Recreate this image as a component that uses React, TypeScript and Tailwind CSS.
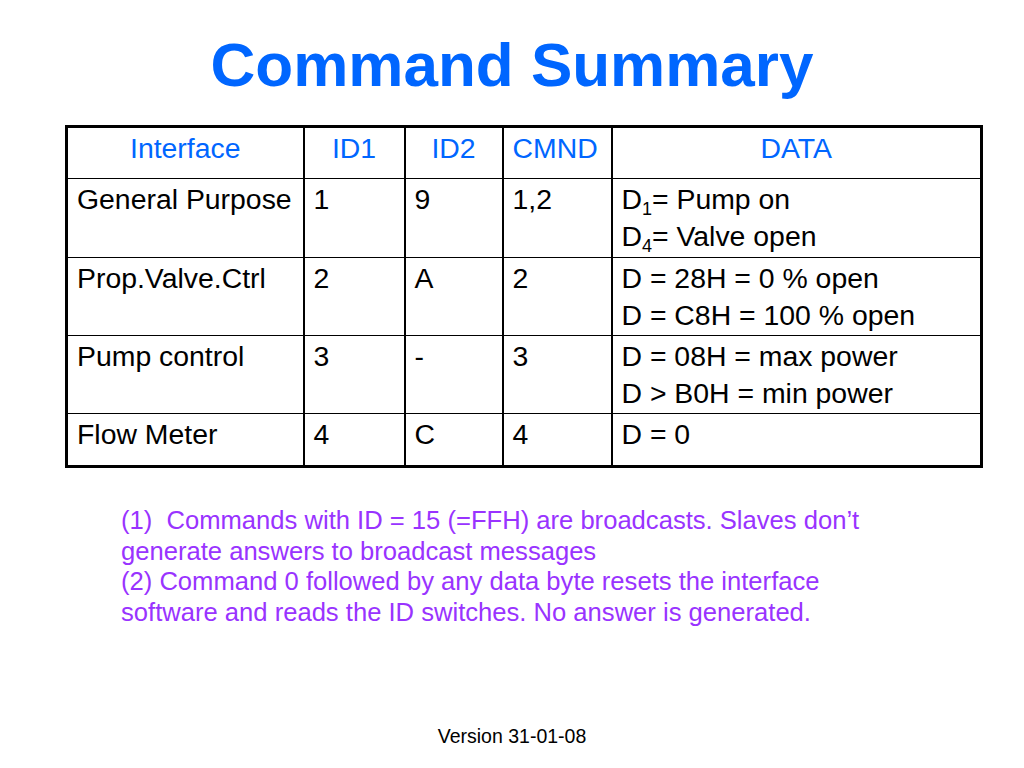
const rows = [
  { name: 'General Purpose', id1: '1', id2: '9', cmnd: '1,2', data: [['D', '1', '= Pump on'], ['D', '4', '= Valve open']] },
  { name: 'Prop.Valve.Ctrl', id1: '2', id2: 'A', cmnd: '2', data: [['D = 28H = 0 % open'], ['D = C8H = 100 % open']] },
  { name: 'Pump control', id1: '3', id2: '-', cmnd: '3', data: [['D = 08H = max power'], ['D > B0H = min power']] },
  { name: 'Flow Meter', id1: '4', id2: 'C', cmnd: '4', data: [['D = 0']] },
]

const heights = ['h-[79px]', 'h-[78px]', 'h-[78px]', 'h-[53px]']

function DataLine({ parts }: { parts: string[] }) {
  if (parts.length === 1) return <div>{parts[0]}</div>
  return (
    <div>
      {parts[0]}
      <sub className="text-[18px] relative top-[6px] align-baseline">{parts[1]}</sub>
      {parts[2]}
    </div>
  )
}

export default function App() {
  const cell = 'border-r-2 border-black px-[9px] pt-[2px] align-top'
  return (
    <div className="w-[1024px] h-[768px] bg-white flex flex-col font-['Liberation_Sans',Arial,sans-serif] text-black">
      <h1 className="mt-[34px] text-center text-[62px] leading-[62px] font-bold text-[#0066ff]">Command Summary</h1>

      <table className="ml-[65px] mt-[29px] w-[918px] table-fixed border-collapse border-[3px] border-black text-[28.4px] leading-[37px]">
        <colgroup>
          <col className="w-[237px]" />
          <col className="w-[101px]" />
          <col className="w-[98px]" />
          <col className="w-[109px]" />
          <col />
        </colgroup>
        <thead>
          <tr className="h-[52px] border-b border-black text-[#0066ff]">
            <th className={`${cell} font-normal text-center`}>Interface</th>
            <th className={`${cell} font-normal text-center`}>ID1</th>
            <th className={`${cell} font-normal text-center`}>ID2</th>
            <th className={`${cell} font-normal text-left`}>CMND</th>
            <th className="px-[9px] pt-[2px] align-top font-normal text-center">DATA</th>
          </tr>
        </thead>
        <tbody>
          {rows.map((r, i) => (
            <tr key={r.name} className={`${heights[i]} ${i < rows.length - 1 ? 'border-b border-black' : ''}`}>
              <td className={`${cell} whitespace-nowrap`}>{r.name}</td>
              <td className={cell}>{r.id1}</td>
              <td className={cell}>{r.id2}</td>
              <td className={cell}>{r.cmnd}</td>
              <td className="px-[9px] pt-[2px] align-top">
                {r.data.map((d, j) => <DataLine key={j} parts={d} />)}
              </td>
            </tr>
          ))}
        </tbody>
      </table>

      <div className="ml-[121px] mt-[37px] text-[25.6px] leading-[30.7px] text-[#9933ff]">
        <div>(1)&nbsp; Commands with ID = 15 (=FFH) are broadcasts. Slaves don’t</div>
        <div>generate answers to broadcast messages</div>
        <div>(2) Command 0 followed by any data byte resets the interface</div>
        <div>software and reads the ID switches. No answer is generated.</div>
      </div>

      <div className="mt-auto mb-[21px] text-center text-[19.5px] leading-[22px]">Version 31-01-08</div>
    </div>
  )
}
